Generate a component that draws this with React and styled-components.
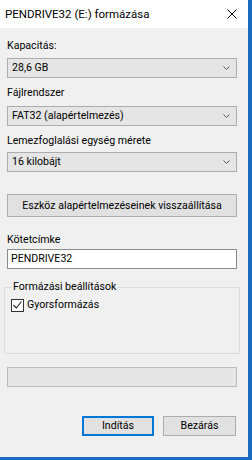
import React from "react";
import styled, { createGlobalStyle } from "styled-components";

const Global = createGlobalStyle`
  html, body { margin: 0; padding: 0; }
  body {
    background: #1b6bc0;
    font-family: Roboto, "Noto Sans", sans-serif;
    font-size: 10.6px;
    color: #000;
  }
`;

const Window = styled.div`
  width: 248px;
  height: 457px;
  background: #f0f0f0;
  display: flex;
  flex-direction: column;
  box-sizing: border-box;
`;

const TitleBar = styled.div`
  height: 28px;
  flex: none;
  background: #fff;
  display: flex;
  align-items: center;
  justify-content: space-between;
  padding: 0 11px 0 5px;
  font-size: 11.5px;
  line-height: 14px;
`;

const CloseIcon = styled.svg`
  width: 10px;
  height: 10px;
  display: block;
`;

const Body = styled.div`
  display: flex;
  flex-direction: column;
  padding: 0 11px 0 7px;
`;

const Label = styled.div`
  line-height: 14px;
  margin-top: ${(p) => p.$mt}px;
  white-space: nowrap;
`;

const Combo = styled.div`
  margin-top: ${(p) => p.$mt}px;
  height: 20px;
  box-sizing: border-box;
  border: 1px solid #adadad;
  background: #e5e5e5;
  display: flex;
  align-items: center;
  justify-content: space-between;
  padding: 0 6px 0 4px;
  line-height: 14px;
`;

const Chevron = styled.svg`
  width: 7px;
  height: 4px;
  display: block;
`;

const ResetButton = styled.div`
  margin-top: 22px;
  height: 23px;
  box-sizing: border-box;
  border: 1px solid #adadad;
  background: #e1e1e1;
  display: flex;
  align-items: center;
  justify-content: center;
  line-height: 14px;
  white-space: nowrap;
`;

const TextInput = styled.div`
  margin-top: 2px;
  height: 20px;
  box-sizing: border-box;
  border: 1px solid #8c8c8c;
  background: #fff;
  display: flex;
  align-items: center;
  padding-left: 3px;
  line-height: 14px;
`;

const GroupBox = styled.fieldset`
  margin: 11px 0 0 -3px;
  width: 236px;
  box-sizing: border-box;
  border: 1px solid #dcdcdc;
  padding: 4px 6px 41px 6px;
  min-width: 0;
`;

const Legend = styled.legend`
  padding: 0 2px;
  line-height: 14px;
`;

const CheckRow = styled.div`
  display: flex;
  align-items: center;
  gap: 3px;
  height: 14px;
  line-height: 14px;
`;

const CheckBox = styled.span`
  width: 13px;
  height: 13px;
  box-sizing: border-box;
  border: 1px solid #333;
  background: #fff;
  display: flex;
  align-items: center;
  justify-content: center;
  flex: none;
`;

const Progress = styled.div`
  margin-top: 13px;
  height: 20px;
  box-sizing: border-box;
  border: 1px solid #bcbcbc;
  background: #e6e6e6;
`;

const Footer = styled.div`
  margin-top: 29px;
  display: flex;
  justify-content: flex-end;
  gap: 9px;
  padding-right: 1px;
`;

const Button = styled.div`
  width: ${(p) => p.$w}px;
  height: 20px;
  box-sizing: border-box;
  border: ${(p) => (p.$default ? "2px solid #0078d7" : "1px solid #adadad")};
  background: #e1e1e1;
  display: flex;
  align-items: center;
  justify-content: center;
  line-height: 14px;
`;

const ChevronDown = () => (
  <Chevron viewBox="0 0 7 4">
    <path d="M0.5 0.5 L3.5 3.5 L6.5 0.5" fill="none" stroke="#555" strokeWidth="1" />
  </Chevron>
);

export default function App() {
  return (
    <>
      <Global />
      <Window>
        <TitleBar>
          <span>PENDRIVE32 (E:) formázása</span>
          <CloseIcon viewBox="0 0 10 10">
            <path d="M0.5 0.5 L9.5 9.5 M9.5 0.5 L0.5 9.5" stroke="#000" strokeWidth="1" fill="none" />
          </CloseIcon>
        </TitleBar>
        <Body>
          <Label $mt={11}>Kapacitás:</Label>
          <Combo $mt={5}>
            <span>28,6 GB</span>
            <ChevronDown />
          </Combo>
          <Label $mt={8}>Fájlrendszer</Label>
          <Combo $mt={6}>
            <span>FAT32 (alapértelmezés)</span>
            <ChevronDown />
          </Combo>
          <Label $mt={8}>Lemezfoglalási egység mérete</Label>
          <Combo $mt={4}>
            <span>16 kilobájt</span>
            <ChevronDown />
          </Combo>
          <ResetButton>Eszköz alapértelmezéseinek visszaállítása</ResetButton>
          <Label $mt={16}>Kötetcímke</Label>
          <TextInput>PENDRIVE32</TextInput>
          <GroupBox>
            <Legend>Formázási beállítások</Legend>
            <CheckRow>
              <CheckBox>
                <svg width="9" height="8" viewBox="0 0 9 8">
                  <path d="M0.5 4 L3.3 7 L8.5 0.5" fill="none" stroke="#222" strokeWidth="1.1" />
                </svg>
              </CheckBox>
              <span>Gyorsformázás</span>
            </CheckRow>
          </GroupBox>
          <Progress />
          <Footer>
            <Button $w={72} $default>Indítás</Button>
            <Button $w={73}>Bezárás</Button>
          </Footer>
        </Body>
      </Window>
    </>
  );
}
